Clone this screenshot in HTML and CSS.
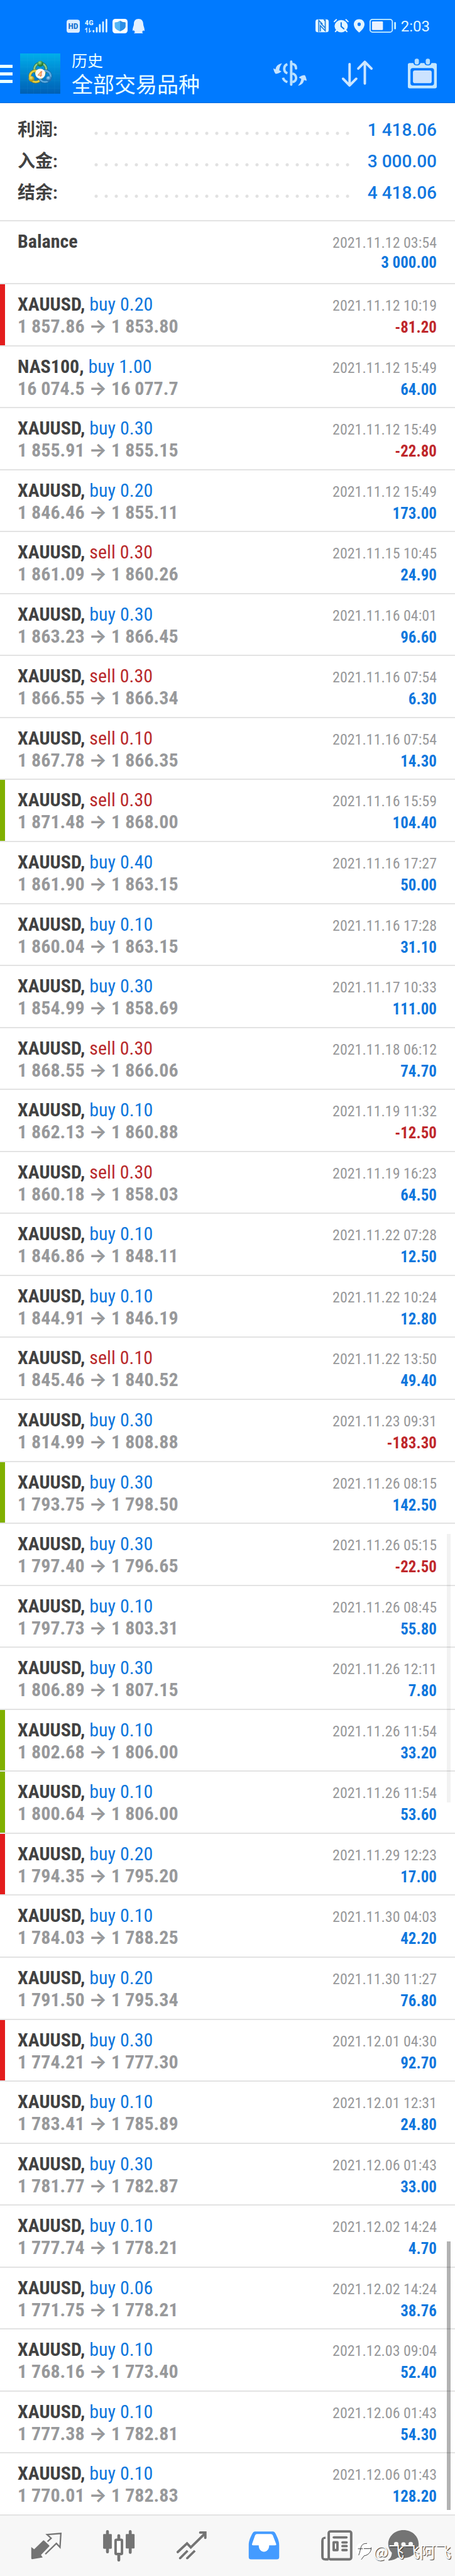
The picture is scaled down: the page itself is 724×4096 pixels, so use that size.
FILE: index.html
```html
<!DOCTYPE html>
<html lang="zh-CN">
<head>
    <meta charset="UTF-8">
    <meta name="viewport" content="width=device-width, initial-scale=1.0">
    <title>历史</title>
    <link rel="stylesheet" href="styles.css">
</head>
<body>
    <header class="app-header">
        <div class="status-bar">
            <div class="status-group">
                <svg class="hd" viewBox="459 135 90 105" preserveAspectRatio="none" aria-hidden="true">
                    <rect x="459" y="141" width="90" height="95" rx="18" fill="#dcedff"/>
                    <text x="504" y="210" text-anchor="middle">HD</text>
                </svg>
                <svg class="signal" viewBox="584 135 154 105" preserveAspectRatio="none" aria-hidden="true">
                    <text x="583" y="180">4G</text>
                    <path d="M586 213l11-10v31M615 201v30l12-11" fill="none" stroke="#dff4ff" stroke-width="6"/>
                    <g stroke="#dff4ff" stroke-width="12" stroke-linecap="round">
                        <path d="M643 222v6M665 200v28M686 179v49M708 159v69M731 141v87"/>
                    </g>
                </svg>
                <svg class="shield" viewBox="769 135 102 105" preserveAspectRatio="none" aria-hidden="true">
                    <rect x="769" y="135" width="102" height="105" rx="20" fill="#fff"/>
                    <path d="M820 149c12 8 23 11 37 12v28c0 18-18 29-37 36-19-7-36-18-36-36v-28c14-1 24-4 36-12z" fill="#53b6f6"/>
                    <path d="M820 149c12 8 23 11 37 12v28c0 18-18 29-37 36z" fill="#2d8fe6"/>
                </svg>
                <svg class="qq" viewBox="909 135 84 105" preserveAspectRatio="none" aria-hidden="true">
                    <path d="M951 135c-22 0-34 16-33 38 0 14-9 25-9 44 0 8 4 6 9-1 1 7 5 12 10 16-8 1-9 4-9 8h62c1-4-1-6-7-8 5-4 8-9 10-15 5 7 9 8 9 0 0-19-9-29-9-44 0-23-12-38-33-38z" fill="#e3f0ff"/>
                </svg>
            </div>
            <div class="status-group">
                <svg class="nfc" viewBox="590 135 92 105" preserveAspectRatio="none" aria-hidden="true">
                    <rect x="590" y="138" width="92" height="94" rx="16" fill="#e3f5ff"/>
                    <path d="M613 230v-84l26 27M658 140v82l-34-38v42M624 165l32 34M648 138l10 14" fill="none" stroke="#1379e0" stroke-width="7"/>
                </svg>
                <svg class="alarm" viewBox="717 135 103 105" preserveAspectRatio="none" aria-hidden="true">
                    <circle cx="768" cy="188" r="45" fill="#e3f5ff"/>
                    <path d="M721 155l14-14M815 155l-14-14M729 227l11-12M807 227l-11-12" stroke="#e3f5ff" stroke-width="9" stroke-linecap="round"/>
                    <path d="M768 164v26l18 17" fill="none" stroke="#0f78ea" stroke-width="9" stroke-linecap="round"/>
                </svg>
                <svg class="pin" viewBox="857 135 72 105" preserveAspectRatio="none" aria-hidden="true">
                    <path fill-rule="evenodd" d="M893 137c-21 0-36 16-36 37 0 24 19 46 36 60 17-14 36-36 36-60 0-21-15-37-36-37zm0 24a11 13 0 1 1 0 26 11 13 0 0 1 0-26z" fill="#e3f5ff"/>
                </svg>
                <svg class="battery" viewBox="970 135 183 105" preserveAspectRatio="none" aria-hidden="true">
                    <rect x="974" y="139" width="154" height="92" rx="16" fill="none" stroke="#c9f0ff" stroke-width="8"/>
                    <rect x="987" y="153" width="76" height="63" rx="6" fill="#e9f1ff"/>
                    <rect x="1141" y="158" width="12" height="53" rx="6" fill="#c9f0ff"/>
                </svg>
                <time class="clock">2:03</time>
            </div>
        </div>
        <div class="toolbar">
            <button class="menu" aria-label="Menu"><span></span><span></span><span></span></button>
            <svg class="logo" viewBox="139 378 279 287" preserveAspectRatio="none" aria-hidden="true">
                <defs>
                    <linearGradient id="sky" x1="0" y1="0" x2="0" y2="1"><stop offset="0" stop-color="#00aeea"/><stop offset=".45" stop-color="#0089d2"/><stop offset="1" stop-color="#005fb4"/></linearGradient>
                    <radialGradient id="green" cx=".4" cy=".3"><stop offset="0" stop-color="#9be08c"/><stop offset="1" stop-color="#1f7d37"/></radialGradient>
                    <radialGradient id="gold" cx=".4" cy=".3"><stop offset="0" stop-color="#f7ec7a"/><stop offset="1" stop-color="#b3981a"/></radialGradient>
                    <radialGradient id="blue" cx=".4" cy=".3"><stop offset="0" stop-color="#a5dcfa"/><stop offset="1" stop-color="#1c6fb4"/></radialGradient>
                </defs>
                <rect x="139" y="378" width="279" height="287" fill="url(#sky)"/>
                <path d="M190 378v287M232 378v287M280 378v287M330 378v287M378 378v287M139 425h279M139 475h279M139 522h279M139 572h279M139 625h279" stroke="#4cc0ee" stroke-opacity=".2" stroke-width="2"/>
                <circle cx="279" cy="489" r="41" fill="none" stroke="#276c3c" stroke-width="19"/>
                <circle cx="279" cy="489" r="41" fill="none" stroke="#8cc88a" stroke-width="13"/>
                <circle cx="247" cy="541" r="40" fill="none" stroke="#8b7b18" stroke-width="19"/>
                <circle cx="247" cy="541" r="40" fill="none" stroke="#e4d044" stroke-width="13"/>
                <circle cx="311" cy="541" r="40" fill="none" stroke="#15629f" stroke-width="19"/>
                <circle cx="311" cy="541" r="40" fill="none" stroke="#58a9df" stroke-width="13"/>
                <circle cx="279" cy="452" r="21" fill="url(#green)"/>
                <circle cx="218" cy="559" r="20" fill="url(#gold)"/>
                <circle cx="338" cy="559" r="20" fill="url(#blue)"/>
                <circle cx="279" cy="522" r="35" fill="#fff7ef"/>
                <text x="278" y="543" text-anchor="middle">4</text>
            </svg>
            <h1 class="heading">
                <span class="heading-small">历史</span>
                <span class="heading-main">全部交易品种</span>
            </h1>
            <div class="actions">
                <button class="action" aria-label="Currency">
                    <svg class="icon-currency" viewBox="322 412 228 215" preserveAspectRatio="none">
                        <g fill="none" stroke="#b8e0ff" stroke-width="17">
                            <path d="M418 453c-28 10-30 54 0 64M388 549c4 16 16 26 30 31" />
                            <path d="M444 434v164" stroke-linecap="round"/>
                            <path d="M452 451c16 2 25 14 25 32" stroke-linecap="round"/>
                            <path d="M452 519c34 8 34 58 0 61"/>
                        </g>
                        <path d="M382 447c-30 5-41 20-45 42l-15-6c2 15 7 29 16 39 15-1 29-8 39-18l-15-8c2-20 8-36 20-49zM490 606c28-7 38-21 42-41l18 6c-2-16-6-30-13-40-16 1-30 6-41 17l17 10c-3 20-11 36-23 48z" fill="#c4e3ff"/>
                    </svg>
                </button>
                <button class="action" aria-label="Sort">
                    <svg class="icon-sort" viewBox="783 412 212 215" preserveAspectRatio="none">
                        <path d="M836 452v152M791 556l45 48 46-48M941 590V436M896 484l45-48 46 48" fill="none" stroke="#cce6ff" stroke-width="17" stroke-linecap="round" stroke-linejoin="round"/>
                    </svg>
                </button>
                <button class="action" aria-label="Calendar">
                    <svg class="icon-calendar" viewBox="1242 412 199 215" preserveAspectRatio="none">
                        <path fill-rule="evenodd" d="M1254 444h26c2 23 46 23 48 0h28c2 23 46 23 48 0h25q12 0 12 12v157q0 12-12 12h-175q-12 0-12-12V456q0-12 12-12zm22 36q-16 0-16 16v92q0 17 16 17h130q16 0 16-17v-92q0-16-16-16z" fill="#c3e6ff"/>
                        <rect x="1277" y="497" width="129" height="91" rx="14" fill="#cce3ff"/>
                        <rect x="1289" y="413" width="29" height="42" rx="14" fill="#b5dfff"/>
                        <rect x="1365" y="413" width="29" height="42" rx="14" fill="#b5dfff"/>
                    </svg>
                </button>
            </div>
        </div>
    </header>

    <dl class="summary">
        <div class="summary-row"><dt>利润:</dt><dd>1 418.06</dd></div>
        <div class="summary-row"><dt>入金:</dt><dd>3 000.00</dd></div>
        <div class="summary-row"><dt>结余:</dt><dd>4 418.06</dd></div>
    </dl>

    <main class="history">
        <div class="deal balance">
            <div class="line"><span class="symbol">Balance</span><time class="date">2021.11.12 03:54</time></div>
            <div class="line"><span></span><span class="profit">3 000.00</span></div>
        </div>
        <div class="deals" id="deals"></div>
        <div class="scrollbar old"></div>
        <div class="scrollbar"></div>
    </main>

    <nav class="tabs">
        <a href="#quotes" aria-label="Quotes">
            <svg viewBox="190 235 260 232" preserveAspectRatio="none">
                <path d="M215 360l20 15 61-61q4-3 8 0l34 34q4 4 0 8l-56 60 12 18-72 12q-7 0-7-7z" fill="#747474"/>
                <path d="M327 321l25-24-28-26 95-8-6 98-25-27-76 76" fill="none" stroke="#747474" stroke-width="10"/>
            </svg>
        </a>
        <a href="#chart" aria-label="Chart">
            <svg viewBox="687 235 260 232" preserveAspectRatio="none">
                <path d="M739 249v145M896 249v149M817 278v30M817 410v43" stroke="#747474" stroke-width="20" stroke-linecap="round"/>
                <rect x="709" y="267" width="60" height="105" rx="6" fill="#747474"/>
                <rect x="865" y="267" width="61" height="103" rx="6" fill="#747474"/>
                <rect x="795" y="308" width="44" height="101" rx="6" fill="#fff" stroke="#747474" stroke-width="17"/>
            </svg>
        </a>
        <a href="#trade" aria-label="Trade">
            <svg viewBox="1187 235 260 232" preserveAspectRatio="none">
                <path d="M1221 395l64-61 26 28 99-100M1376 257h35v37" fill="none" stroke="#747474" stroke-width="17" stroke-linecap="round"/>
                <path d="M1237 439l52-53M1286 439l53-53" stroke="#747474" stroke-width="16"/>
                <circle cx="1237" cy="439" r="8" fill="#747474"/>
                <circle cx="1286" cy="439" r="8" fill="#747474"/>
            </svg>
        </a>
        <a href="#history" aria-label="History" aria-current="page">
            <svg viewBox="121 235 260 232" preserveAspectRatio="none">
                <path d="M188 249h126q10 0 15 12c14 28 27 55 27 85v85q0 16-16 16H162q-16 0-16-16v-85c0-30 12-57 27-85q5-12 15-12z" fill="#449bff"/>
                <path d="M203 267h95q10 0 14 9l23 62q3 10-8 10h-40c0 60-72 60-72 0h-38q-11 0-8-10l21-62q4-9 13-9z" fill="#fff"/>
            </svg>
        </a>
        <a href="#news" aria-label="News">
            <svg viewBox="625 235 260 232" preserveAspectRatio="none">
                <path d="M677 286q-30 0-30 30v110q0 30 30 30h20v-18h-26q-7 0-7-8V314q0-10 13-11z" fill="#747474"/>
                <rect x="664" y="303" width="27" height="134" rx="6" fill="#fff"/>
                <rect x="699" y="249" width="155" height="198" rx="12" fill="#f7f7f7" stroke="#747474" stroke-width="17"/>
                <path d="M734 291h87M794 327h28M794 353h28M794 381h28" stroke="#747474" stroke-width="17" stroke-linecap="round"/>
                <rect x="733" y="326" width="26" height="55" fill="#fff" stroke="#747474" stroke-width="17" stroke-linejoin="round"/>
            </svg>
        </a>
        <a href="#messages" aria-label="Messages">
            <svg viewBox="1122 235 260 232" preserveAspectRatio="none">
                <path d="M1213 240c-60 0-105 45-105 99 0 25 9 44 25 61-1 20-7 37-22 48-5 5-3 8 4 8 26-2 45-10 59-22 12 3 25 4 39 4 60 0 105-45 105-99s-45-99-105-99z" fill="#747474"/>
                <path d="M1163 339h0M1213 341h0M1263 339h0" stroke="#f7f7f7" stroke-width="31" stroke-linecap="round"/>
            </svg>
        </a>
        <div class="watermark">
            <svg viewBox="882 338 104 130" preserveAspectRatio="none" aria-hidden="true">
                <path d="M934 340c-70 0-70 95-18 94l-2 28 24-28c65-5 65-94-4-94z" fill="#fff"/>
                <path d="M956 348c-52-2-38 38-58 84M893 386h34M934 385h50M984 376c4 30-20 56-48 60l-20 27" fill="none" stroke="#333" stroke-width="4"/>
            </svg>
            <span>@飞飞阿飞</span>
        </div>
    </nav>

    <script>
        // symbol, side, volume, open, close, time, profit, mark (sl / tp)
        const deals = [
            ['XAUUSD', 'buy', '0.20', '1 857.86', '1 853.80', '2021.11.12 10:19', '-81.20', 'sl'],
            ['NAS100', 'buy', '1.00', '16 074.5', '16 077.7', '2021.11.12 15:49', '64.00'],
            ['XAUUSD', 'buy', '0.30', '1 855.91', '1 855.15', '2021.11.12 15:49', '-22.80'],
            ['XAUUSD', 'buy', '0.20', '1 846.46', '1 855.11', '2021.11.12 15:49', '173.00'],
            ['XAUUSD', 'sell', '0.30', '1 861.09', '1 860.26', '2021.11.15 10:45', '24.90'],
            ['XAUUSD', 'buy', '0.30', '1 863.23', '1 866.45', '2021.11.16 04:01', '96.60'],
            ['XAUUSD', 'sell', '0.30', '1 866.55', '1 866.34', '2021.11.16 07:54', '6.30'],
            ['XAUUSD', 'sell', '0.10', '1 867.78', '1 866.35', '2021.11.16 07:54', '14.30'],
            ['XAUUSD', 'sell', '0.30', '1 871.48', '1 868.00', '2021.11.16 15:59', '104.40', 'tp'],
            ['XAUUSD', 'buy', '0.40', '1 861.90', '1 863.15', '2021.11.16 17:27', '50.00'],
            ['XAUUSD', 'buy', '0.10', '1 860.04', '1 863.15', '2021.11.16 17:28', '31.10'],
            ['XAUUSD', 'buy', '0.30', '1 854.99', '1 858.69', '2021.11.17 10:33', '111.00'],
            ['XAUUSD', 'sell', '0.30', '1 868.55', '1 866.06', '2021.11.18 06:12', '74.70'],
            ['XAUUSD', 'buy', '0.10', '1 862.13', '1 860.88', '2021.11.19 11:32', '-12.50'],
            ['XAUUSD', 'sell', '0.30', '1 860.18', '1 858.03', '2021.11.19 16:23', '64.50'],
            ['XAUUSD', 'buy', '0.10', '1 846.86', '1 848.11', '2021.11.22 07:28', '12.50'],
            ['XAUUSD', 'buy', '0.10', '1 844.91', '1 846.19', '2021.11.22 10:24', '12.80'],
            ['XAUUSD', 'sell', '0.10', '1 845.46', '1 840.52', '2021.11.22 13:50', '49.40'],
            ['XAUUSD', 'buy', '0.30', '1 814.99', '1 808.88', '2021.11.23 09:31', '-183.30'],
            ['XAUUSD', 'buy', '0.30', '1 793.75', '1 798.50', '2021.11.26 08:15', '142.50', 'tp'],
            ['XAUUSD', 'buy', '0.30', '1 797.40', '1 796.65', '2021.11.26 05:15', '-22.50'],
            ['XAUUSD', 'buy', '0.10', '1 797.73', '1 803.31', '2021.11.26 08:45', '55.80'],
            ['XAUUSD', 'buy', '0.30', '1 806.89', '1 807.15', '2021.11.26 12:11', '7.80'],
            ['XAUUSD', 'buy', '0.10', '1 802.68', '1 806.00', '2021.11.26 11:54', '33.20', 'tp'],
            ['XAUUSD', 'buy', '0.10', '1 800.64', '1 806.00', '2021.11.26 11:54', '53.60', 'tp'],
            ['XAUUSD', 'buy', '0.20', '1 794.35', '1 795.20', '2021.11.29 12:23', '17.00', 'sl'],
            ['XAUUSD', 'buy', '0.10', '1 784.03', '1 788.25', '2021.11.30 04:03', '42.20'],
            ['XAUUSD', 'buy', '0.20', '1 791.50', '1 795.34', '2021.11.30 11:27', '76.80'],
            ['XAUUSD', 'buy', '0.30', '1 774.21', '1 777.30', '2021.12.01 04:30', '92.70', 'sl'],
            ['XAUUSD', 'buy', '0.10', '1 783.41', '1 785.89', '2021.12.01 12:31', '24.80'],
            ['XAUUSD', 'buy', '0.30', '1 781.77', '1 782.87', '2021.12.06 01:43', '33.00'],
            ['XAUUSD', 'buy', '0.10', '1 777.74', '1 778.21', '2021.12.02 14:24', '4.70'],
            ['XAUUSD', 'buy', '0.06', '1 771.75', '1 778.21', '2021.12.02 14:24', '38.76'],
            ['XAUUSD', 'buy', '0.10', '1 768.16', '1 773.40', '2021.12.03 09:04', '52.40'],
            ['XAUUSD', 'buy', '0.10', '1 777.38', '1 782.81', '2021.12.06 01:43', '54.30'],
            ['XAUUSD', 'buy', '0.10', '1 770.01', '1 782.83', '2021.12.06 01:43', '128.20']
        ];

        document.getElementById('deals').innerHTML = deals.map(([symbol, side, volume, open, close, time, profit, mark]) => `
            <div class="deal ${mark || ''}">
                <div class="line">
                    <span class="symbol">${symbol}, <span class="${side}">${side} ${volume}</span></span>
                    <time class="date">${time}</time>
                </div>
                <div class="line">
                    <span class="price">${open} <span class="arrow">→</span> ${close}</span>
                    <span class="profit ${profit.startsWith('-') ? 'loss' : ''}">${profit}</span>
                </div>
            </div>`).join('');
    </script>
</body>
</html>
```
FILE: styles.css
```css
* { box-sizing: border-box; }
body {
    margin: 0;
    min-height: 100vh;
    display: flex;
    flex-direction: column;
    background: #fff;
    font-family: Roboto, "Noto Sans CJK SC", sans-serif;
}
button {
    border: none;
    padding: 0;
    background: none;
    cursor: pointer;
}
svg { display: block; overflow: visible; }

/* Header */
.app-header {
    height: 164px;
    padding-top: 30px;
    background: #007aff;
    border-bottom: 1px solid #0c6ddb;
}
.status-bar {
    display: flex;
    justify-content: space-between;
    padding: 0 40px 0 106px;
}
.status-group {
    display: flex;
    align-items: center;
    gap: 8px;
    height: 23px;
}
.status-group svg { height: 23px; }
.hd, .nfc { width: 21px; }
.signal { width: 36px; }
.shield, .alarm { width: 24px; }
.qq { width: 19px; }
.pin { width: 17px; }
.battery { width: 42px; }
.hd text {
    fill: #1170cf;
    font: 700 58px "Roboto Condensed", Roboto, sans-serif;
}
.signal text {
    fill: #dff4ff;
    font: 700 54px "Roboto Condensed", Roboto, sans-serif;
}
.logo text {
    fill: #ee9350;
    font: italic 700 58px Roboto, sans-serif;
}
.clock {
    color: #dff6ff;
    font-size: 24px;
    line-height: 24px;
}
.toolbar {
    display: flex;
    align-items: center;
    height: 110px;
    padding: 18px 29px 0 0;
}
.menu {
    display: grid;
    gap: 7px;
    width: 20px;
    margin-right: 12px;
}
.menu span { height: 5px; background: #e9ffff; }
.logo { width: 64px; height: 64px; }
.heading {
    flex: 1;
    margin: 0 0 0 18px;
    color: #eaffff;
    font-family: "Noto Sans CJK SC", sans-serif;
    font-weight: 400;
}
.heading span { display: block; }
.heading-small { font-size: 25px; line-height: 32px; }
.heading-main { font-size: 34px; line-height: 44px; }
.actions { display: flex; gap: 56px; }
.action svg { height: 48px; }
.icon-currency { width: 53px; }
.icon-sort { width: 49px; }
.icon-calendar { width: 46px; }

/* Totals */
.summary {
    height: 188px;
    margin: 0;
    padding: 18px 29px 0 28px;
    border-bottom: 2px solid #e3e3e3;
}
.summary-row {
    display: flex;
    height: 50px;
    font-size: 28px;
    line-height: 50px;
}
.summary dt {
    flex: 1;
    display: flex;
    color: #424242;
    font-weight: 700;
}
.summary dt::after {
    content: "";
    flex: 1;
    height: 6px;
    margin: 27px 22px 0 53px;
    background: radial-gradient(circle, #e1e1e1 2px, transparent 3px) 0 0 / 16px 6px repeat-x;
}
.summary dd {
    margin: 0;
    color: #0f77e0;
    font-weight: 500;
}

/* Deals */
.history {
    position: relative;
    flex: 1;
    display: flex;
    flex-direction: column;
}
.deals {
    flex: 1;
    display: grid;
    grid-auto-rows: 1fr;
}
.deal {
    padding: 15px 29px 0 28px;
    border-bottom: 2px solid #e3e3e3;
    font-family: "Roboto Condensed", "Liberation Sans Narrow", Roboto, sans-serif;
}
.balance { height: 100px; }
.sl { box-shadow: inset 8px 0 #e31d1d; }
.tp { box-shadow: inset 8px 0 #80b000; }
.line {
    display: flex;
    justify-content: space-between;
    align-items: baseline;
    height: 34px;
    font-size: 30px;
    line-height: 34px;
    white-space: nowrap;
}
.symbol { color: #424242; font-weight: 700; }
.buy, .sell { font-weight: 400; }
.buy { color: #0f77dd; }
.sell { color: #b92a2c; }
.price { color: #98999b; font-weight: 700; }
.arrow { font-family: Inter, sans-serif; }
.date { color: #98999b; font-size: 24px; }
.profit {
    color: #0f77dd;
    font-size: 25px;
    font-weight: 700;
}
.loss { color: #bf282c; }
.scrollbar {
    position: absolute;
    right: 7px;
    bottom: 9px;
    width: 6px;
    height: 427px;
    background: rgba(0, 0, 0, 0.3);
}
.scrollbar.old {
    bottom: 1134px;
    background: rgba(0, 0, 0, 0.05);
}

/* Bottom tabs */
.tabs {
    position: relative;
    display: grid;
    grid-template-columns: repeat(6, 1fr);
    height: 96px;
    padding: 0 15px 0 16px;
    background: #f7f7f7;
}
.tabs a { display: grid; place-items: center; }
.tabs a svg { width: 60px; height: 52px; }
.watermark {
    position: absolute;
    right: 6px;
    bottom: 22px;
    display: flex;
    align-items: center;
    gap: 3px;
    color: #fff;
    font: 25px/36px "Noto Sans CJK SC", sans-serif;
    text-shadow: 1px 1px 1px #333;
}
.watermark svg { width: 24px; height: 29px; }
```
